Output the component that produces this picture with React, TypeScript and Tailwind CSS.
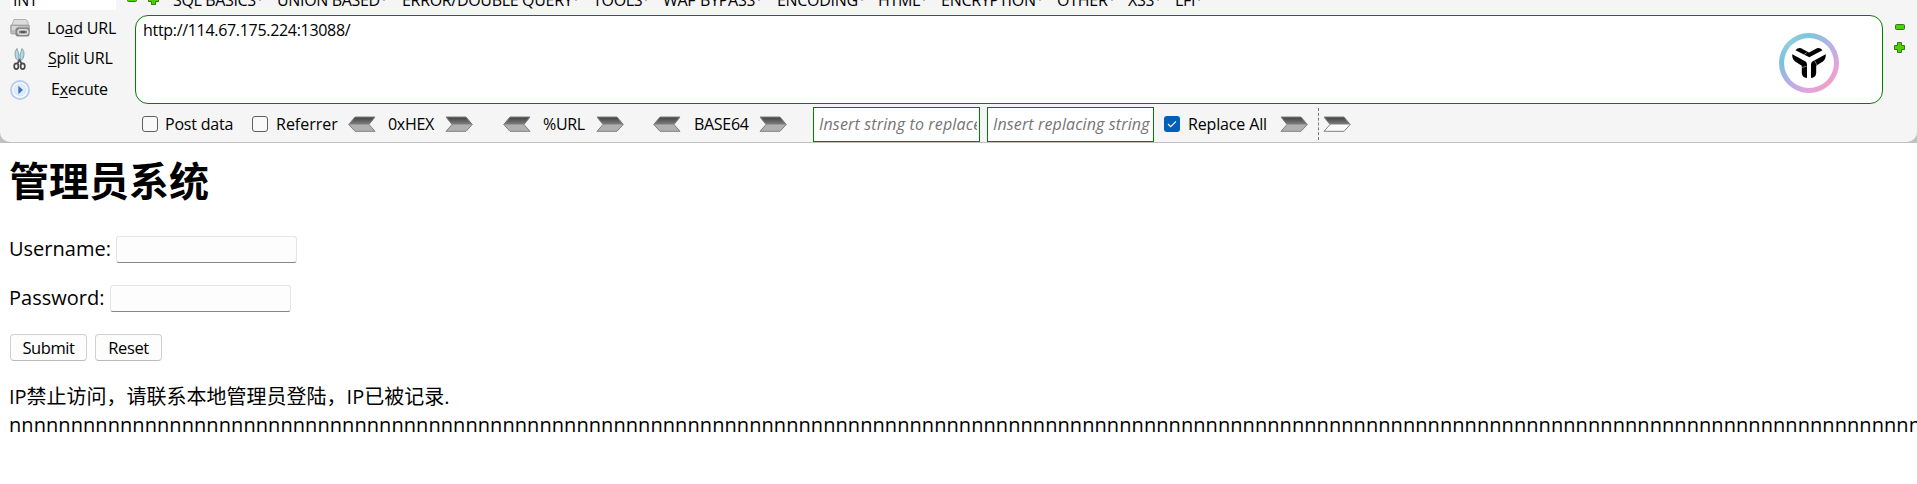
import type { ReactNode } from "react";

const MENUS = [
  { label: "SQL BASICS", box: "w-[104px]", track: "tracking-[-0.35px]" },
  { label: "UNION BASED", box: "w-[125px]", track: "tracking-[-0.35px]" },
  { label: "ERROR/DOUBLE QUERY", box: "w-[191px]", track: "tracking-[-0.32px]" },
  { label: "TOOLS", box: "w-[70px]", track: "tracking-[-0.3px]" },
  { label: "WAF BYPASS", box: "w-[114px]", track: "tracking-[-0.3px] [word-spacing:1px]" },
  { label: "ENCODING", box: "w-[101px]", track: "tracking-[-0.3px]" },
  { label: "HTML", box: "w-[63px]", track: "tracking-[-0.3px]" },
  { label: "ENCRYPTION", box: "w-[116px]", track: "tracking-[-0.25px]" },
  { label: "OTHER", box: "w-[71px]", track: "tracking-[-0.25px]" },
  { label: "XSS", box: "w-[47px]", track: "tracking-[-0.25px]" },
  { label: "LFI", box: "w-[40px]", track: "tracking-[-0.25px]" },
];

function Arrow({ left = false, light = false }: { left?: boolean; light?: boolean }) {
  return (
    <svg width="28" height="16" viewBox="0 0 28 16" className={left ? "shrink-0 -scale-x-100" : "shrink-0"}>
      <defs>
        <linearGradient id="arrowTop" x1="0" y1="0" x2="0" y2="1">
          <stop offset="0" stopColor="#3f3f3f" />
          <stop offset="1" stopColor="#808080" />
        </linearGradient>
      </defs>
      <path d="M1 1H21L27.3 8.5L21 15.3H1L7 8.5Z" fill={light ? "#fafafa" : "#b0b0b0"} />
      <path d="M1 1H21L27.3 8.5H7Z" fill="url(#arrowTop)" />
      <path d="M1 1H21L27.3 8.5L21 15.3H1L7 8.5Z" fill="none" stroke="#808080" strokeWidth="1" />
    </svg>
  );
}

function Minus() {
  return (
    <svg width="10" height="6" viewBox="0 0 10 6">
      <rect x=".5" y=".5" width="9" height="5" rx="1" fill="#4fd000" stroke="#2f7d12" />
    </svg>
  );
}

function Plus() {
  return (
    <svg width="11" height="11" viewBox="0 0 11 11">
      <path d="M3.5 .5h4v3h3v4h-3v3h-4v-3h-3v-4h3z" fill="#4fd000" stroke="#2f7d12" strokeLinejoin="round" />
    </svg>
  );
}

function DriveIcon() {
  return (
    <svg width="20" height="20" viewBox="0 0 20 20">
      <path d="M4 1.5h12l2 2.500v4H1.500z" fill="#dcdcdc" stroke="#b0b0b0" />
      <path d="M.8 7.200h18.400v7.600q0 1-1 1H1.800q-1 0-1-1z" fill="#bdbdbd" stroke="#999" />
      <path d="M2 9h6M2 11h4" stroke="#eee" />
      <rect x="5.500" y="9.500" width="14" height="9" rx="2" fill="#868686" />
      <rect x="8" y="11.800" width="10" height="4.400" rx="2.200" fill="none" stroke="#dedede" strokeWidth="1.400" />
      <path d="M11 14h4" stroke="#444" strokeWidth="1.600" />
    </svg>
  );
}

function ScissorsIcon() {
  return (
    <svg width="20" height="24" viewBox="0 0 20 24">
      <path d="M7 1.500Q4.500 4 5 8q.3 4 3.500 6L9 8z" fill="#b4d8e6" stroke="#7d9eac" strokeWidth=".9" />
      <path d="M12 1.500Q14.500 4 14 8q-.3 4-3.500 6L10 8z" fill="#b4d8e6" stroke="#7d9eac" strokeWidth=".9" />
      <path d="M7.500 16.500l2-3.500 2 3.500" fill="none" stroke="#555" strokeWidth="1.800" />
      <ellipse cx="6.300" cy="19.300" rx="2.100" ry="2.900" fill="none" stroke="#484848" strokeWidth="1.700" />
      <ellipse cx="12.700" cy="19.300" rx="2.100" ry="2.900" fill="none" stroke="#484848" strokeWidth="1.700" />
    </svg>
  );
}

function PlayIcon() {
  return (
    <svg width="20" height="20" viewBox="0 0 20 20">
      <circle cx="10" cy="10" r="9" fill="#fafcff" stroke="#b7cdf0" strokeWidth="2" />
      <circle cx="10" cy="10" r="6" fill="#e3edfa" stroke="#d3e1f6" />
      <path d="M8.300 5.800L13 10l-4.700 4.200z" fill="#3e74c4" />
    </svg>
  );
}

function Logo() {
  return (
    <div className="flex size-[60px] items-center justify-center rounded-full bg-[conic-gradient(from_0deg,#7cc5dd_0deg,#b5b3e8_50deg,#e6a3d4_100deg,#eda0cb_140deg,#e3a4d6_180deg,#b9ade8_225deg,#7cc0de_270deg,#8ccfdb_315deg,#7cc5dd_360deg)]">
      <div className="flex size-[50px] items-center justify-center rounded-full bg-white">
        <svg width="34" height="32" viewBox="0 0 34 32">
          <path d="M3.500 3.200Q5.500 .7 9 1.200L17 5.600 25 1.200Q28.500 .7 30.500 3.200L17.300 10.300z" />
          <path d="M.3 7.300L13.600 14.600Q15 15.800 15 17.500V31Q10 30.500 9.800 26V18.700L3.500 14.800Q-.3 12 .3 7.300z" />
          <path d="M33.700 7.300L20.400 14.600Q19 15.800 19 17.500V31Q24 30.500 24.200 26V18.700L30.500 14.800Q34.300 12 33.700 7.300z" />
          <path d="M9.800 20.500l5-1.300M22.500 13.500l2.500 4.500M12 7.500l3-2" stroke="#aaa" strokeWidth=".7" />
        </svg>
      </div>
    </div>
  );
}

function Action({ icon, pad, children }: { icon: ReactNode; pad: string; children: ReactNode }) {
  return (
    <div className="flex h-[31px] items-center">
      <span className="flex w-5 justify-center">{icon}</span>
      <span className={pad}>{children}</span>
    </div>
  );
}

export default function App() {
  return (
    <div className="h-[484px] w-full overflow-hidden bg-white font-['Open_Sans','Noto_Sans_CJK_SC',sans-serif] text-black">
      <header className="h-[143px] bg-[#c0c0c0] text-[16px] leading-[22px] whitespace-nowrap">
        <div className="h-[142px] overflow-hidden rounded-b-[10px] bg-[#f5f5f5]">
          <div className="flex h-[15px] items-start overflow-hidden">
            <div className="ml-[10px] flex h-[10px] w-[106px] items-end overflow-hidden bg-white pl-[3px]">
              <span className="-mb-px tracking-[-0.3px]">INT</span>
            </div>
            <div className="ml-[11px] flex h-[2px] w-[10px] items-end overflow-hidden"><Minus /></div>
            <div className="ml-[11px] flex h-[5px] w-[25px] items-end overflow-hidden"><Plus /></div>
            <nav className="-mt-[11px] flex">
              {MENUS.map((m) => (
                <div key={m.label} className={`flex shrink-0 ${m.box}`}>
                  <span className={m.track}>{m.label}</span>
                  <span className="mt-[10px] ml-[3px] size-[2px] bg-[#b0b0b0]" />
                </div>
              ))}
            </nav>
          </div>

          <div className="flex h-[89px]">
            <div className="w-[135px] pl-[10px]">
              <div className="-mt-[3px]">
                <Action icon={<DriveIcon />} pad="pl-[17px] tracking-[-0.2px]">Lo<u className="underline-offset-2">a</u>d URL</Action>
                <Action icon={<ScissorsIcon />} pad="-mt-[2px] pl-[18px] tracking-[-0.2px]"><u className="underline-offset-2">S</u>plit URL</Action>
                <Action icon={<PlayIcon />} pad="-mt-[2px] pl-[21px] tracking-[-0.25px]">E<u className="underline-offset-2">x</u>ecute</Action>
              </div>
            </div>
            <div className="flex w-[1748px] justify-between rounded-[13px] border border-[#008000] bg-white">
              <span className="pt-[3px] pl-[7px] tracking-[-0.31px]">http://114.67.175.224:13088/</span>
              <div className="pt-[17px] pr-[43px]"><Logo /></div>
            </div>
            <div className="flex flex-col items-center gap-3 pt-[9px] pl-[11px]">
              <Minus />
              <Plus />
            </div>
          </div>

          <div className="flex h-[38px] items-center pt-[2px]">
            <span className="ml-[142px] size-4 rounded-[3px] border border-[#5f5f5f] bg-[#f9f9f9]" />
            <span className="w-[86px] pl-[7px] tracking-[-0.2px]">Post data</span>
            <span className="ml-2 size-4 rounded-[3px] border border-[#5f5f5f] bg-[#f9f9f9]" />
            <span className="w-20 pl-2">Referrer</span>
            <Arrow left />
            <span className="w-[69px] pl-[12px] tracking-[-0.3px]">0xHEX</span>
            <Arrow />
            <span className="w-[30px]" />
            <Arrow left />
            <span className="w-[65px] pl-[12px] tracking-[-0.3px]">%URL</span>
            <Arrow />
            <span className="w-[29px]" />
            <Arrow left />
            <span className="w-[78px] pl-[13px] tracking-[-0.3px]">BASE64</span>
            <Arrow />
            <span className="w-[26px]" />
            <div className="flex h-[35px] w-[167px] items-center border border-[#008000] bg-white px-[2px]">
              <span className="w-full overflow-hidden pl-[3px] tracking-[0.150px] text-[#757575] italic">Insert string to replace</span>
            </div>
            <div className="ml-[7px] flex h-[35px] w-[167px] items-center border border-[#008000] bg-white px-[2px]">
              <span className="w-full overflow-hidden pl-[3px] tracking-[0.120px] text-[#757575] italic">Insert replacing string</span>
            </div>
            <span className="ml-[10px] flex size-4 items-center justify-center rounded-[3px] bg-[#005fb8]">
              <svg width="10" height="10" viewBox="0 0 10 10"><path d="M1 5l2.700 2.700L9 2.400" fill="none" stroke="#fff" strokeWidth="1.100" /></svg>
            </span>
            <span className="w-[100px] pl-[8px] tracking-[-0.15px]">Replace All</span>
            <Arrow />
            <span className="mr-[4px] ml-[10px] h-8 border-l border-dashed border-[#777]" />
            <Arrow light />
          </div>
        </div>
      </header>

      <main className="pl-[9px] text-[20px] leading-7 whitespace-nowrap">
        <h1 className="pt-[11px] text-[40px] leading-[54px] font-bold">管理员系统</h1>
        <div className="mt-[27px] flex h-7 items-center">
          <label className="w-[107px]">Username:</label>
          <input className="h-[27px] w-[181px] rounded-[3px] border border-[#e5e5e5] border-b-[#868686] bg-[#fdfdfd]" />
        </div>
        <div className="mt-[21px] flex h-7 items-center">
          <label className="w-[101px]">Password:</label>
          <input className="h-[27px] w-[181px] rounded-[3px] border border-[#e5e5e5] border-b-[#868686] bg-[#fdfdfd]" />
        </div>
        <div className="mt-[22px] ml-px flex gap-2 text-[16.500px] leading-6 tracking-[-0.4px]">
          <button className="h-[27px] w-[77px] rounded-[4px] border border-[#d0d0d0] border-b-[#bbb] bg-[#fdfdfd]">Submit</button>
          <button className="h-[27px] w-[67px] rounded-[4px] border border-[#d0d0d0] border-b-[#bbb] bg-[#fdfdfd]">Reset</button>
        </div>
        <p className="mt-[22px]">IP禁止访问，请联系本地管理员登陆，IP已被记录.</p>
        <p className="tracking-[0.070px]">{"n".repeat(160)}</p>
      </main>
    </div>
  );
}
